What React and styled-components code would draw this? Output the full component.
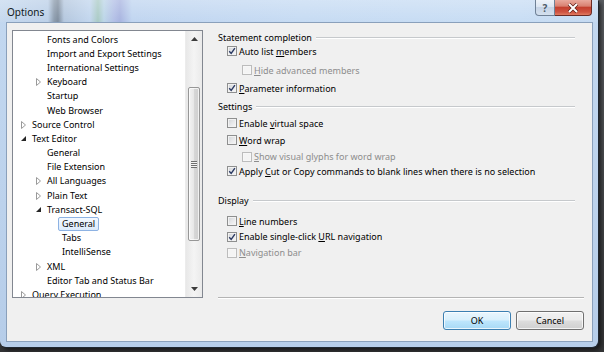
import React from 'react';
import styled, { createGlobalStyle } from 'styled-components';

const GlobalStyle = createGlobalStyle`
  html, body {
    margin: 0;
    padding: 0;
  }
  body {
    width: 604px;
    height: 352px;
    overflow: hidden;
    background: #3a3a3a;
    font-family: "Segoe UI", "Noto Sans", sans-serif;
    font-size: 9px;
    color: #000;
  }
`;

const Screen = styled.div`
  width: 604px;
  height: 352px;
  background: linear-gradient(180deg, #5a5d61 0%, #333436 100%);
`;

const Window = styled.div`
  width: 598px;
  height: 347px;
  display: flex;
  flex-direction: column;
  background: linear-gradient(180deg, #c3d8f0 0%, #bcd2ec 60%, #b6cde9 100%);
  border-radius: 0 0 6px 6px;
  box-shadow: 1px 1px 0 #1f2731, 3px 3px 4px rgba(0, 0, 0, 0.6);
`;

const TitleBar = styled.div`
  height: 22px;
  display: flex;
  align-items: flex-start;
  background:
    linear-gradient(180deg, rgba(255, 255, 255, 0.25) 0%, rgba(255, 255, 255, 0) 100%),
    linear-gradient(90deg,
      #c6d9ef 0px, #bcd0e8 48px, #8c9cae 54px, #7e8d9e 58px, #b4c7de 64px,
      #c2d6ee 90px, #a9cac4 98px, #bcd6e8 104px, #b2bfe6 114px, #a8b4e0 120px,
      #c0d5f0 132px, #c6dbf3 300px, #c8ddf4 520px, #c4d9f1 598px);
`;

const Title = styled.span`
  padding-left: 7px;
  line-height: 24px;
  font-size: 10px;
  color: #101820;
`;

const Caption = styled.div`
  margin-left: auto;
  margin-right: 6px;
  display: flex;
`;

const HelpButton = styled.div`
  width: 20px;
  height: 16px;
  box-sizing: border-box;
  border: 1px solid #6f8196;
  border-top: none;
  border-radius: 0 0 0 4px;
  background: linear-gradient(180deg, #eef3f9 0%, #dce6f2 45%, #c6d4e6 50%, #d4e0ee 100%);
  display: flex;
  align-items: center;
  justify-content: center;
  font-size: 10px;
  font-weight: bold;
  color: #4e5a68;
`;

const CloseButton = styled.div`
  width: 37px;
  height: 16px;
  box-sizing: border-box;
  border: 1px solid #6b2a24;
  border-left: none;
  border-top: none;
  border-radius: 0 0 4px 0;
  background: linear-gradient(180deg, #e9a99d 0%, #d98172 40%, #c4402f 50%, #cf5341 80%, #e07b62 100%);
  display: flex;
  align-items: center;
  justify-content: center;
`;

const Client = styled.div`
  flex: 1;
  margin: 0 5px 5px 6px;
  background: #f0f0f0;
  border: 1px solid #8aa0bb;
  padding: 7px 8px 0 5px;
  display: flex;
  flex-direction: column;
`;

const Main = styled.div`
  height: 268px;
  display: flex;
  gap: 15px;
`;

const Tree = styled.div`
  width: 191px;
  height: 268px;
  box-sizing: border-box;
  border: 1px solid #828790;
  background: #fff;
  display: flex;
  overflow: hidden;
`;

const TreeList = styled.div`
  flex: 1;
  padding-top: 1.5px;
  overflow: hidden;
`;

const TreeRow = styled.div`
  height: 14.2px;
  display: flex;
  align-items: center;
  padding-left: ${p => 4 + p.$level * 15}px;
  white-space: nowrap;
`;

const Expander = styled.span`
  width: 12px;
  height: 14px;
  padding-right: 3px;
  box-sizing: border-box;
  display: flex;
  align-items: center;
  justify-content: flex-end;
`;

const TreeLabel = styled.span`
  padding: 0 3px;
  height: 14px;
  line-height: 12px;
  box-sizing: border-box;
  border: 1px solid ${p => (p.$selected ? '#8db2e3' : 'transparent')};
  border-radius: 2px;
  background: ${p => (p.$selected ? 'linear-gradient(180deg, #f4f9ff 0%, #dcebfc 100%)' : 'none')};
  margin-left: -1px;
`;

const ScrollBar = styled.div`
  width: 16px;
  background: linear-gradient(90deg, #e8e8e8 0%, #f4f4f4 50%, #eaeaea 100%);
  border-left: 1px solid #ececec;
  display: flex;
  flex-direction: column;
  align-items: center;
`;

const ScrollArrow = styled.div`
  height: 16px;
  width: 16px;
  display: flex;
  align-items: center;
  justify-content: center;
`;

const Track = styled.div`
  flex: 1;
  width: 100%;
  display: flex;
  flex-direction: column;
  align-items: center;
  padding-top: 40px;
  padding-bottom: 40px;
  box-sizing: border-box;
`;

const Thumb = styled.div`
  width: 12px;
  flex: 1;
  box-sizing: border-box;
  border: 1px solid #979797;
  border-radius: 2px;
  background: linear-gradient(90deg, #f3f3f3 0%, #e8e8e8 45%, #d6d6d6 55%, #cfcfcf 100%);
  box-shadow: inset 0 0 0 1px rgba(255, 255, 255, 0.7);
  display: flex;
  align-items: center;
  justify-content: center;
`;

const Grip = styled.div`
  width: 6px;
  height: 7px;
  background: repeating-linear-gradient(180deg, #6f6f6f 0, #6f6f6f 1px, #f4f4f4 1px, #f4f4f4 2px);
`;

const Panel = styled.div`
  flex: 1;
  display: flex;
  flex-direction: column;
`;

const GroupHeader = styled.div`
  height: 14px;
  margin-top: ${p => p.$gap}px;
  margin-right: 9px;
  display: flex;
  align-items: center;
  gap: 4px;
  white-space: nowrap;

  &::after {
    content: "";
    flex: 1;
    height: 1px;
    background: #c6c9cc;
    box-shadow: 0 1px 0 #fff;
  }
`;

const OptionRow = styled.div`
  height: 14px;
  margin-top: ${p => p.$gap}px;
  padding-left: ${p => (p.$indent ? 24 : 9)}px;
  display: flex;
  align-items: center;
  white-space: nowrap;
  color: ${p => (p.$disabled ? '#8d8d8d' : '#000')};
`;

const Box = styled.span`
  width: 10px;
  height: 10px;
  box-sizing: border-box;
  margin-right: 2px;
  border: 1px solid ${p => (p.$disabled ? '#bcbcbc' : '#8e8f8f')};
  background: ${p => (p.$disabled
    ? '#f4f4f4'
    : 'linear-gradient(135deg, #cfd2d6 0%, #e6e7e9 50%, #f8f8f8 100%)')};
  box-shadow: inset 0 0 0 1px ${p => (p.$disabled ? '#f7f7f7' : '#f2f2f2')};
  display: flex;
  align-items: center;
  justify-content: center;
`;

const Mnemonic = styled.u`
  text-decoration-thickness: 1px;
  text-underline-offset: 1px;
`;

const Separator = styled.div`
  margin-top: auto;
  height: 1px;
  background: #b4b4b4;
  box-shadow: 0 1px 0 #fff;
`;

const Footer = styled.div`
  margin-top: 13px;
  display: flex;
  justify-content: flex-end;
  gap: 5px;
`;

const Button = styled.div`
  width: 68px;
  height: 19px;
  box-sizing: border-box;
  border: 1px solid ${p => (p.$default ? '#3c7fb1' : '#707070')};
  border-radius: 3px;
  background: ${p => (p.$default
    ? 'linear-gradient(180deg, #eaf6fd 0%, #d9f0fc 48%, #bee6fd 52%, #a7d9f5 100%)'
    : 'linear-gradient(180deg, #f2f2f2 0%, #ebebeb 48%, #dddddd 52%, #cfcfcf 100%)')};
  box-shadow: inset 0 0 0 1px rgba(255, 255, 255, 0.75);
  display: flex;
  align-items: center;
  justify-content: center;
`;

const treeItems = [
  { label: 'Fonts and Colors', level: 1 },
  { label: 'Import and Export Settings', level: 1 },
  { label: 'International Settings', level: 1 },
  { label: 'Keyboard', level: 1, state: 'collapsed' },
  { label: 'Startup', level: 1 },
  { label: 'Web Browser', level: 1 },
  { label: 'Source Control', level: 0, state: 'collapsed' },
  { label: 'Text Editor', level: 0, state: 'expanded' },
  { label: 'General', level: 1 },
  { label: 'File Extension', level: 1 },
  { label: 'All Languages', level: 1, state: 'collapsed' },
  { label: 'Plain Text', level: 1, state: 'collapsed' },
  { label: 'Transact-SQL', level: 1, state: 'expanded' },
  { label: 'General', level: 2, selected: true },
  { label: 'Tabs', level: 2 },
  { label: 'IntelliSense', level: 2 },
  { label: 'XML', level: 1, state: 'collapsed' },
  { label: 'Editor Tab and Status Bar', level: 1 },
  { label: 'Query Execution', level: 0, state: 'collapsed' },
];

// gap = space above the row, in px
const options = [
  { header: 'Statement completion', gap: 0 },
  { label: 'Auto list members', key: 10, checked: true, gap: 0 },
  { label: 'Hide advanced members', key: 0, disabled: true, indent: true, gap: 5 },
  { label: 'Parameter information', key: 0, checked: true, gap: 4 },
  { header: 'Settings', gap: 4 },
  { label: 'Enable virtual space', key: 7, gap: 3 },
  { label: 'Word wrap', key: 0, gap: 3 },
  { label: 'Show visual glyphs for word wrap', key: 0, disabled: true, indent: true, gap: 2.5 },
  { label: 'Apply Cut or Copy commands to blank lines when there is no selection', key: 6, checked: true, gap: 0.5 },
  { header: 'Display', gap: 15.5 },
  { label: 'Line numbers', key: 0, gap: 6.5 },
  { label: 'Enable single-click URL navigation', key: 20, checked: true, gap: 1.5 },
  { label: 'Navigation bar', key: 0, disabled: true, gap: 2 },
];

const Arrow = ({ state }) => {
  if (state === 'collapsed') {
    return (
      <svg width="5" height="8" viewBox="0 0 5 8">
        <polygon points="0.5,0.5 4.5,4 0.5,7.5" fill="#fff" stroke="#9a9a9a" strokeWidth="1" />
      </svg>
    );
  }
  if (state === 'expanded') {
    return (
      <svg width="5" height="5" viewBox="0 0 5 5">
        <polygon points="5,0 5,5 0,5" fill="#262626" />
      </svg>
    );
  }
  return null;
};

const Check = () => (
  <svg width="8" height="8" viewBox="0 0 8 8">
    <path d="M1.2 4.2 L3.2 6.4 L6.9 1.2" fill="none" stroke="#2b3a63" strokeWidth="1.4" />
  </svg>
);

const Label = ({ text, at }) => (
  <span>
    {text.slice(0, at)}
    <Mnemonic>{text[at]}</Mnemonic>
    {text.slice(at + 1)}
  </span>
);

const App = () => {
  return (
    <>
      <GlobalStyle />
      <Screen>
        <Window>
          <TitleBar>
            <Title>Options</Title>
            <Caption>
              <HelpButton>?</HelpButton>
              <CloseButton>
                <svg width="12" height="10" viewBox="0 0 12 10">
                  <path d="M2 1 L10 9 M10 1 L2 9" stroke="#5a1d17" strokeWidth="3.4" />
                  <path d="M2 1 L10 9 M10 1 L2 9" stroke="#fff" strokeWidth="2" />
                </svg>
              </CloseButton>
            </Caption>
          </TitleBar>
          <Client>
            <Main>
              <Tree>
                <TreeList>
                  {treeItems.map((item, i) => (
                    <TreeRow key={i} $level={item.level}>
                      <Expander><Arrow state={item.state} /></Expander>
                      <TreeLabel $selected={item.selected}>{item.label}</TreeLabel>
                    </TreeRow>
                  ))}
                </TreeList>
                <ScrollBar>
                  <ScrollArrow>
                    <svg width="7" height="4" viewBox="0 0 7 4"><polygon points="0,4 3.5,0 7,4" fill="#3c3c3c" /></svg>
                  </ScrollArrow>
                  <Track>
                    <Thumb><Grip /></Thumb>
                  </Track>
                  <ScrollArrow>
                    <svg width="7" height="4" viewBox="0 0 7 4"><polygon points="0,0 7,0 3.5,4" fill="#3c3c3c" /></svg>
                  </ScrollArrow>
                </ScrollBar>
              </Tree>
              <Panel>
                {options.map((o, i) => (o.header ? (
                  <GroupHeader key={i} $gap={o.gap}>{o.header}</GroupHeader>
                ) : (
                  <OptionRow key={i} $gap={o.gap} $indent={o.indent} $disabled={o.disabled}>
                    <Box $disabled={o.disabled}>{o.checked && <Check />}</Box>
                    <Label text={o.label} at={o.key} />
                  </OptionRow>
                )))}
                <Separator />
              </Panel>
            </Main>
            <Footer>
              <Button $default>OK</Button>
              <Button>Cancel</Button>
            </Footer>
          </Client>
        </Window>
      </Screen>
    </>
  );
};

export default App;
